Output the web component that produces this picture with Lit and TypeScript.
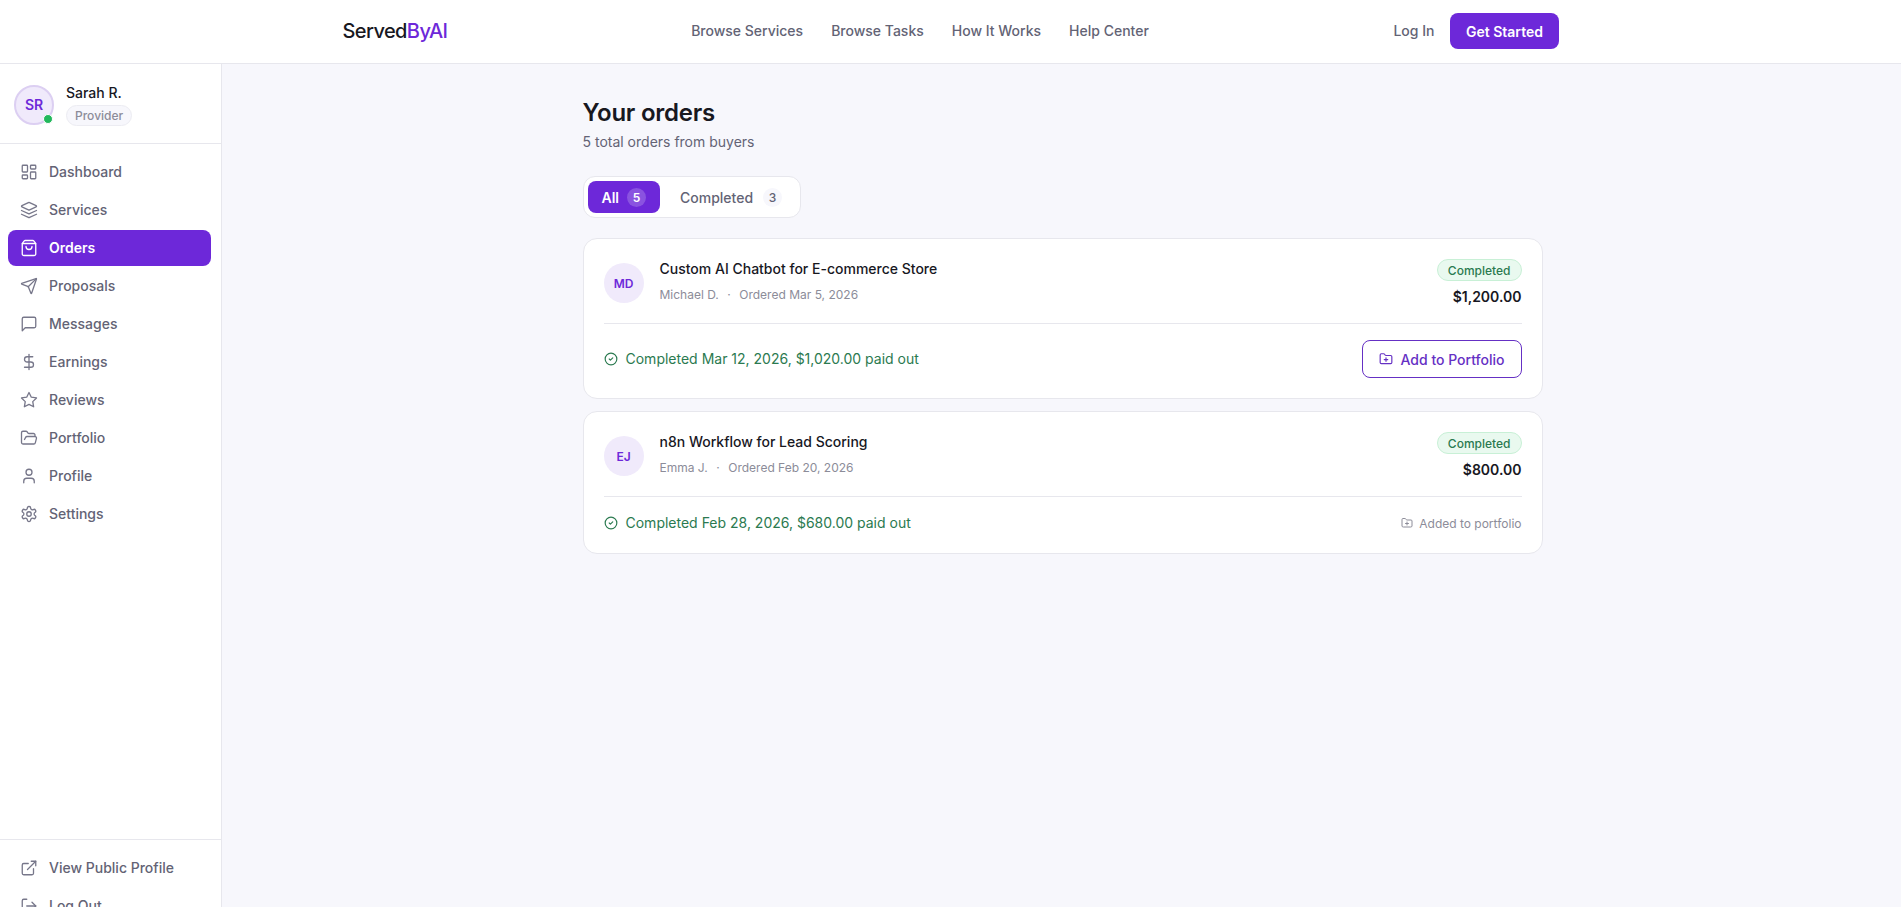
import { LitElement, html, css, svg } from "lit";
import { customElement } from "lit/decorators.js";

const I: Record<string, any> = {
  dashboard: svg`<rect x="3" y="3" width="7" height="9" rx="1"/><rect x="14" y="3" width="7" height="5" rx="1"/><rect x="14" y="12" width="7" height="9" rx="1"/><rect x="3" y="16" width="7" height="5" rx="1"/>`,
  layers: svg`<path d="m12.83 2.18a2 2 0 0 0-1.66 0L2.6 6.08a1 1 0 0 0 0 1.83l8.58 3.91a2 2 0 0 0 1.66 0l8.58-3.9a1 1 0 0 0 0-1.83Z"/><path d="m22 17.65-9.17 4.16a2 2 0 0 1-1.66 0L2 17.65"/><path d="m22 12.65-9.17 4.16a2 2 0 0 1-1.66 0L2 12.65"/>`,
  bag: svg`<path d="M16 10a4 4 0 0 1-8 0"/><path d="M3.103 6.034h17.794"/><path d="M3.4 5.467a2 2 0 0 0-.4 1.2V20a2 2 0 0 0 2 2h14a2 2 0 0 0 2-2V6.667a2 2 0 0 0-.4-1.2l-2-2.667A2 2 0 0 0 17 2H7a2 2 0 0 0-1.6.8z"/>`,
  send: svg`<path d="M14.536 21.686a.5.5 0 0 0 .937-.024l6.5-19a.496.496 0 0 0-.635-.635l-19 6.5a.5.5 0 0 0-.024.937l7.93 3.18a2 2 0 0 1 1.112 1.11z"/><path d="m21.854 2.147-10.94 10.939"/>`,
  message: svg`<path d="M21 15a2 2 0 0 1-2 2H7l-4 4V5a2 2 0 0 1 2-2h14a2 2 0 0 1 2 2z"/>`,
  dollar: svg`<line x1="12" y1="2" x2="12" y2="22"/><path d="M17 5H9.5a3.5 3.5 0 0 0 0 7h5a3.5 3.5 0 0 1 0 7H6"/>`,
  star: svg`<polygon points="12 2 15.09 8.26 22 9.27 17 14.14 18.18 21.02 12 17.77 5.82 21.02 7 14.14 2 9.27 8.91 8.26 12 2"/>`,
  folderOpen: svg`<path d="m6 14 1.5-2.9A2 2 0 0 1 9.24 10H20a2 2 0 0 1 1.94 2.5l-1.54 6a2 2 0 0 1-1.95 1.5H4a2 2 0 0 1-2-2V5a2 2 0 0 1 2-2h3.9a2 2 0 0 1 1.69.9l.81 1.2a2 2 0 0 0 1.67.9H18a2 2 0 0 1 2 2v2"/>`,
  user: svg`<path d="M19 21v-2a4 4 0 0 0-4-4H9a4 4 0 0 0-4 4v2"/><circle cx="12" cy="7" r="4"/>`,
  settings: svg`<path d="M12.22 2h-.44a2 2 0 0 0-2 2v.18a2 2 0 0 1-1 1.73l-.43.25a2 2 0 0 1-2 0l-.15-.08a2 2 0 0 0-2.73.73l-.22.38a2 2 0 0 0 .73 2.73l.15.1a2 2 0 0 1 1 1.72v.51a2 2 0 0 1-1 1.74l-.15.09a2 2 0 0 0-.73 2.73l.22.38a2 2 0 0 0 2.73.73l.15-.08a2 2 0 0 1 2 0l.43.25a2 2 0 0 1 1 1.73V20a2 2 0 0 0 2 2h.44a2 2 0 0 0 2-2v-.18a2 2 0 0 1 1-1.73l.43-.25a2 2 0 0 1 2 0l.15.08a2 2 0 0 0 2.73-.73l.22-.39a2 2 0 0 0-.73-2.73l-.15-.08a2 2 0 0 1-1-1.74v-.5a2 2 0 0 1 1-1.74l.15-.09a2 2 0 0 0 .73-2.73l-.22-.38a2 2 0 0 0-2.73-.73l-.15.08a2 2 0 0 1-2 0l-.43-.25a2 2 0 0 1-1-1.73V4a2 2 0 0 0-2-2z"/><circle cx="12" cy="12" r="3"/>`,
  external: svg`<path d="M15 3h6v6"/><path d="M10 14 21 3"/><path d="M18 13v6a2 2 0 0 1-2 2H5a2 2 0 0 1-2-2V8a2 2 0 0 1 2-2h6"/>`,
  logout: svg`<path d="m16 17 5-5-5-5"/><path d="M21 12H9"/><path d="M9 21H5a2 2 0 0 1-2-2V5a2 2 0 0 1 2-2h4"/>`,
  check: svg`<circle cx="12" cy="12" r="10"/><path d="m9 12 2 2 4-4"/>`,
  folderPlus: svg`<path d="M12 10v6"/><path d="M9 13h6"/><path d="M20 20a2 2 0 0 0 2-2V8a2 2 0 0 0-2-2h-7.9a2 2 0 0 1-1.69-.9L9.6 3.9A2 2 0 0 0 7.93 3H4a2 2 0 0 0-2 2v13a2 2 0 0 0 2 2Z"/>`,
};

const icon = (name: string, size: number, sw = 2) => html`<svg
  class="ic"
  width=${size}
  height=${size}
  viewBox="0 0 24 24"
  fill="none"
  stroke="currentColor"
  stroke-width=${sw}
  stroke-linecap="round"
  stroke-linejoin="round"
>${I[name]}</svg>`;

const navItems = [
  ["dashboard", "Dashboard"],
  ["layers", "Services"],
  ["bag", "Orders"],
  ["send", "Proposals"],
  ["message", "Messages"],
  ["dollar", "Earnings"],
  ["star", "Reviews"],
  ["folderOpen", "Portfolio"],
  ["user", "Profile"],
  ["settings", "Settings"],
];

const orders = [
  {
    initials: "MD",
    title: "Custom AI Chatbot for E-commerce Store",
    buyer: "Michael D.",
    date: "Ordered Mar 5, 2026",
    price: "$1,200.00",
    done: "Completed Mar 12, 2026, $1,020.00 paid out",
    added: false,
  },
  {
    initials: "EJ",
    title: "n8n Workflow for Lead Scoring",
    buyer: "Emma J.",
    date: "Ordered Feb 20, 2026",
    price: "$800.00",
    done: "Completed Feb 28, 2026, $680.00 paid out",
    added: true,
  },
];

@customElement("app-root")
export class AppRoot extends LitElement {
  static styles = css`
    :host {
      display: block;
      height: 907px;
      overflow: hidden;
      font-family: Inter, "Liberation Sans", sans-serif;
      font-size: 14px;
      color: #18181f;
      background: #f7f7fc;
    }
    * { box-sizing: border-box; }
    .ic { flex: none; display: block; }
    header {
      height: 64px;
      background: #fff;
      border-bottom: 1px solid #e7e7ed;
      padding: 0 342.5px 1px;
      display: flex;
      align-items: center;
      justify-content: space-between;
    }
    .logo {
      font-size: 20px;
      font-weight: 500;
      letter-spacing: -0.6px;
      line-height: 28px;
      width: 104px;
      white-space: nowrap;
    }
    .logo span { color: #6d28d9; }
    .topnav { display: flex; gap: 28px; }
    .topnav a, .login { color: #636375; font-weight: 500; font-size: 14px; line-height: 20px; }
    .right { display: flex; align-items: center; gap: 16px; }
    .cta {
      height: 36px;
      padding: 0 15.5px;
      border-radius: 8px;
      background: #6d28d9;
      color: #fff;
      font-weight: 600;
      display: flex;
      align-items: center;
    }
    .body { display: flex; height: 843px; }
    aside {
      width: 222px;
      flex: none;
      height: 907px;
      background: #fff;
      border-right: 1px solid #e7e7ed;
      display: flex;
      flex-direction: column;
    }
    .profile {
      height: 80px;
      border-bottom: 1px solid #e7e7ed;
      padding: 2px 14px 0;
      display: flex;
      align-items: center;
      gap: 12px;
    }
    .pav {
      position: relative;
      width: 40px;
      height: 40px;
      border-radius: 50%;
      background: #f0eafb;
      border: 2px solid #dccff2;
      color: #6d28d9;
      font-size: 14px;
      font-weight: 600;
      display: flex;
      align-items: center;
      justify-content: center;
      flex: none;
    }
    .dot {
      position: absolute;
      right: -1px;
      bottom: -1px;
      width: 10px;
      height: 10px;
      border-radius: 50%;
      background: #22b85c;
      border: 1px solid #fff;
    }
    .pname { font-weight: 500; line-height: 20px; color: #18181f; }
    .pill {
      display: inline-flex;
      align-items: center;
      height: 21px;
      margin-top: 2px;
      padding: 0 8px;
      border-radius: 11px;
      font-size: 12px;
      font-weight: 500;
      color: #8c8c99;
      background: #f7f7fc;
      border: 1px solid #ececf2;
    }
    nav { padding: 10px 10px 10px 8px; display: flex; flex-direction: column; gap: 2px; flex: 1; }
    .item {
      height: 36px;
      padding: 0 11.5px;
      border-radius: 8px;
      display: flex;
      align-items: center;
      gap: 11.5px;
      color: #636375;
      font-weight: 500;
      line-height: 20px;
    }
    .item .ic { color: #77778a; }
    .item.active { background: #6d28d9; color: #fff; font-weight: 600; }
    .item.active .ic { color: #fff; }
    .bottom {
      height: 132px;
      flex: none;
      border-top: 1px solid #e7e7ed;
      padding: 10px 10px 10px 8px;
      display: flex;
      flex-direction: column;
      gap: 2px;
    }
    main { flex: 1; padding: 33px 0 0 2px; min-width: 0; }
    .wrap { width: 960px; margin: 0 auto; }
    h1 { margin: 0; font-size: 24px; font-weight: 600; letter-spacing: -0.24px; line-height: 32px; color: #18181f; }
    .sub { margin-top: 3px; line-height: 20px; color: #636375; }
    .tabs {
      margin-top: 24px;
      display: inline-flex;
      vertical-align: top;
      padding: 4px;
      gap: 6px;
      background: #fff;
      border: 1px solid #e7e7ed;
      border-radius: 12px;
    }
    .tab {
      height: 32px;
      padding: 0 14px;
      border-radius: 8px;
      display: flex;
      align-items: center;
      gap: 10px;
      font-weight: 500;
      color: #636375;
    }
    .tab.on { background: #6d28d9; color: #fff; font-weight: 600; gap: 8px; }
    .count {
      min-width: 19px;
      height: 19px;
      border-radius: 50%;
      display: flex;
      align-items: center;
      justify-content: center;
      font-size: 12px;
      background: #f7f7fc;
      color: #636375;
    }
    .tab.on .count { background: rgba(255, 255, 255, 0.2); color: #fff; }
    .cards { margin-top: 20px; display: flex; flex-direction: column; gap: 12px; }
    .card {
      background: #fff;
      border: 1px solid #e7e7ed;
      border-radius: 14px;
      padding: 20px;
    }
    .top {
      display: flex;
      align-items: flex-start;
      justify-content: space-between;
      padding-bottom: 16px;
      border-bottom: 1px solid #e7e7ed;
    }
    .lead { display: flex; align-items: center; gap: 16px; height: 48px; }
    .av {
      width: 40px;
      height: 40px;
      border-radius: 50%;
      background: #f0eafb;
      color: #6d28d9;
      font-size: 12px;
      font-weight: 600;
      display: flex;
      align-items: center;
      justify-content: center;
      flex: none;
    }
    .info { align-self: flex-start; }
    .title { font-weight: 500; line-height: 20px; color: #18181f; }
    .meta {
      margin-top: 7px;
      display: flex;
      gap: 8.5px;
      font-size: 12px;
      line-height: 18px;
      color: #8c8c99;
    }
    .side { display: flex; flex-direction: column; align-items: flex-end; gap: 6px; }
    .status {
      height: 22px;
      padding: 0 10px;
      border-radius: 11px;
      background: #e9f9ef;
      border: 1px solid #c8f0d6;
      color: #2b7a50;
      font-size: 12px;
      font-weight: 500;
      display: flex;
      align-items: center;
    }
    .price { font-size: 14px; font-weight: 600; line-height: 20px; color: #18181f; }
    .foot { padding-top: 16px; display: flex; align-items: center; justify-content: space-between; }
    .done { display: flex; align-items: center; gap: 8px; color: #2b7a50; line-height: 20px; }
    .add {
      height: 38px;
      padding: 0 16px;
      border-radius: 8px;
      border: 1px solid #6530c4;
      color: #6530c4;
      font-weight: 500;
      display: flex;
      align-items: center;
      gap: 8px;
    }
    .added { display: flex; align-items: center; gap: 6px; font-size: 12px; color: #8c8c99; }
  `;

  render() {
    return html`
      <header>
        <div class="logo">Served<span>ByAI</span></div>
        <div class="topnav">
          <a>Browse Services</a><a>Browse Tasks</a><a>How It Works</a><a>Help Center</a>
        </div>
        <div class="right"><span class="login">Log In</span><span class="cta">Get Started</span></div>
      </header>
      <div class="body">
        <aside>
          <div class="profile">
            <div class="pav">SR<span class="dot"></span></div>
            <div>
              <div class="pname">Sarah R.</div>
              <div class="pill">Provider</div>
            </div>
          </div>
          <nav>
            ${navItems.map(
              ([ic, label]) => html`<div class="item ${label === "Orders" ? "active" : ""}">
                ${icon(ic, 18, 1.75)}<span>${label}</span>
              </div>`
            )}
          </nav>
          <div class="bottom">
            <div class="item">${icon("external", 18, 1.75)}<span>View Public Profile</span></div>
            <div class="item">${icon("logout", 18, 1.75)}<span>Log Out</span></div>
          </div>
        </aside>
        <main>
          <div class="wrap">
            <h1>Your orders</h1>
            <div class="sub">5 total orders from buyers</div>
            <div class="tabs">
              <div class="tab on">All<span class="count">5</span></div>
              <div class="tab">Completed<span class="count">3</span></div>
            </div>
            <div class="cards">
              ${orders.map(
                (o) => html`<div class="card">
                  <div class="top">
                    <div class="lead">
                      <div class="av">${o.initials}</div>
                      <div class="info">
                        <div class="title">${o.title}</div>
                        <div class="meta"><span>${o.buyer}</span><span>·</span><span>${o.date}</span></div>
                      </div>
                    </div>
                    <div class="side">
                      <div class="status">Completed</div>
                      <div class="price">${o.price}</div>
                    </div>
                  </div>
                  <div class="foot">
                    <div class="done">${icon("check", 14)}<span>${o.done}</span></div>
                    ${o.added
                      ? html`<div class="added">${icon("folderPlus", 12)}<span>Added to portfolio</span></div>`
                      : html`<div class="add">${icon("folderPlus", 14)}<span>Add to Portfolio</span></div>`}
                  </div>
                </div>`
              )}
            </div>
          </div>
        </main>
      </div>
    `;
  }
}
